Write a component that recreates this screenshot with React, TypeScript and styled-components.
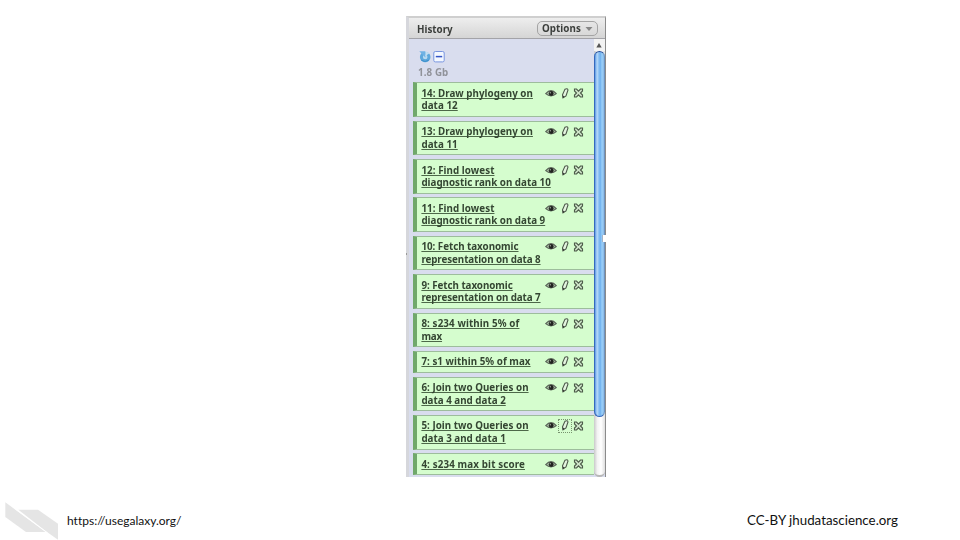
import React from "react";
import styled, { createGlobalStyle } from "styled-components";

const GlobalStyle = createGlobalStyle`
  body { margin: 0; background: #fff; overflow: hidden; }
  * { box-sizing: border-box; }
`;

const Slide = styled.main`
  width: 960px;
  height: 540px;
  padding-top: 16px;
  display: flex;
  flex-direction: column;
  background: #fff;
`;

const Panel = styled.section`
  position: relative;
  width: 200px;
  height: 461px;
  margin-left: 406px;
  border-top: 2px solid #cfcfcf;
  border-left: 3px solid #d6d7dc;
  border-right: 1px solid #8b8b8b;
  display: flex;
  flex-direction: column;
  font-family: "Noto Sans", "Open Sans", sans-serif;
  font-weight: 700;
  color: #3b3e3b;
`;

const Header = styled.header`
  flex: none;
  height: 21px;
  display: flex;
  align-items: center;
  justify-content: space-between;
  padding: 1px 7px 0 8px;
  border-bottom: 1px solid #a3a3a8;
  background: linear-gradient(#eeeeee, #d5d5d5);
  font-size: 9.8px;
`;

const Title = styled.span`
  position: static;
  padding-top: 1px;
  filter: blur(0.3px);
`;

const OptionsButton = styled.button`
  width: 61px;
  height: 15px;
  padding: 0 4px;
  border: 1px solid #a4a4a4;
  border-radius: 5px;
  background: linear-gradient(#e6e6e6, #d8d8d8);
  font: inherit;
  line-height: 13px;
  letter-spacing: 0.06px;
  color: inherit;
  display: flex;
  align-items: center;
  justify-content: space-between;
  filter: blur(0.3px);
`;

const Body = styled.div`
  flex: 1;
  min-height: 0;
  display: flex;
  background: #d9ddee;
`;

const Content = styled.div`
  flex: 1;
  min-width: 0;
  overflow: hidden;
  padding-left: 4px;
`;

const Summary = styled.div`
  height: 43.3px;
  padding: 11px 0 0 5px;
`;

const Tools = styled.div`
  display: flex;
  gap: 2px;
  height: 13px;
  margin-left: 1px;
  filter: blur(0.3px);
`;

const Size = styled.div`
  margin-top: 3.4px;
  font-size: 9.8px;
  line-height: 13px;
  letter-spacing: 0.1px;
  color: #909299;
  filter: blur(0.3px);
`;

const Row = styled.article<{ $single?: boolean }>`
  height: ${(p) => (p.$single ? 21.9 : 34.7)}px;
  margin-bottom: 3.7px;
  padding: 4.5px 0 0 4.4px;
  display: flex;
  border: 1px solid #9dbd9c;
  border-right: 0;
  border-left: 4px solid #70a86b;
  background: #d5fdce;
`;

const Name = styled.div`
  width: 122.6px;
  font-size: 9.8px;
  line-height: 12.5px;
  white-space: nowrap;
  filter: blur(0.3px);
`;

const Line = styled.span<{ $spacing: number }>`
  display: block;
  width: max-content;
  height: 12.5px;
  color: #344632;
  letter-spacing: ${(p) => p.$spacing}px;
  text-decoration: underline;
  text-decoration-color: #4d6849;
  text-decoration-thickness: 1px;
  text-underline-offset: 1px;
  text-decoration-skip-ink: none;
`;

const Actions = styled.div`
  display: flex;
  height: 13px;
  margin: -1.5px 0 0 0;
  filter: blur(0.25px);
`;

const Action = styled.span<{ $focus?: boolean }>`
  width: 14px;
  height: 14px;
  display: flex;
  align-items: center;
  justify-content: center;
  outline: ${(p) => (p.$focus ? "1px dotted #78936f" : "none")};
  outline-offset: -1px;
`;

const Track = styled.div`
  flex: none;
  width: 11.5px;
  display: flex;
  flex-direction: column;
  background: linear-gradient(90deg, #c9c9c9, #f3f3f3 30%, #fff 65%, #dedede);
  border-bottom: 2px solid #b8b8b8;
  border-radius: 0 0 6px 6px;
`;

const TrackUp = styled.div`
  height: 12px;
  display: flex;
  align-items: center;
  justify-content: center;
  background: #f3f3f3;
`;

const Thumb = styled.div`
  height: 366px;
  border: 1px solid #3569bd;
  border-top-color: #234995;
  border-right-color: #6d93c0;
  border-radius: 6px;
  background: linear-gradient(90deg, #5b98e4, #b8daf8 24%, #8fc2f4 40%, #6eb0ee 58%, #9ad0fa 78%, #8ab9e5);
`;

const Handle = styled.i`
  position: absolute;
  left: 193px;
  top: 217px;
  width: 5px;
  height: 7px;
  background: #fff;
  border-left: 1px solid #a5b3c6;
`;

const Speck = styled.i`
  position: absolute;
  left: -3px;
  top: 235px;
  width: 1px;
  height: 2px;
  background: #999;
`;

const Footer = styled.footer`
  height: 43px;
  margin-top: 20px;
  display: flex;
  font-family: Lato, sans-serif;
  font-variant-ligatures: none;
  color: #111;
  line-height: 20px;
`;

const Logo = styled.svg`
  flex: none;
  width: 67px;
  height: 43px;
`;

const Source = styled.span`
  width: 680px;
  padding-top: 14px;
  font-size: 12px;
`;

const Credit = styled.span`
  padding-top: 13px;
  font-size: 13.33px;
  white-space: nowrap;
`;

type Entry = { lines: [string, number][]; focus?: boolean };

const entries: Entry[] = [
  { lines: [["14: Draw phylogeny on", 0.03], ["data 12", 0.06]] },
  { lines: [["13: Draw phylogeny on", 0.03], ["data 11", 0.06]] },
  { lines: [["12: Find lowest", 0.06], ["diagnostic rank on data 10", 0]] },
  { lines: [["11: Find lowest", 0.06], ["diagnostic rank on data 9", 0]] },
  { lines: [["10: Fetch taxonomic", -0.03], ["representation on data 8", -0.08]] },
  { lines: [["9: Fetch taxonomic", -0.04], ["representation on data 7", -0.08]] },
  { lines: [["8: s234 within 5% of", 0.11], ["max", -0.15]] },
  { lines: [["7: s1 within 5% of max", 0.04]] },
  { lines: [["6: Join two Queries on", 0.03], ["data 4 and data 2", 0.01]] },
  { lines: [["5: Join two Queries on", 0.03], ["data 3 and data 1", 0.01]], focus: true },
  { lines: [["4: s234 max bit score", 0.13]] },
];

const Eye = () => (
  <svg width="12" height="9" viewBox="0 0 12 9">
    <path d="M.7 4.7Q6-1.4 11.3 4.7Q6 9.3 .7 4.7Z" fill="#a5bba0" stroke="#5a6558" strokeWidth="1.1" />
    <circle cx="6.2" cy="4.5" r="2.4" fill="#20221f" />
    <circle cx="5.3" cy="3.7" r=".7" fill="#a5aaa3" />
  </svg>
);

const Pencil = () => (
  <svg width="8" height="11" viewBox="0 0 8 11">
    <path d="M3.9 1.3Q6.5-.2 7 2L5 8L2 9.9L1.5 6.9Z" fill="#e3f4df" stroke="#4d594a" strokeWidth="1.1" />
    <path d="M1.7 7.4L3.8 8.8L1.8 10Z" fill="#353b34" />
  </svg>
);

const Cross = () => (
  <svg width="11" height="10" viewBox="0 0 11 10">
    <path d="M1.5 1H3.5L5.5 3.1L7.5 1H9.5V3L7.5 5L9.5 7V9H7.5L5.5 6.9L3.5 9H1.5V7L3.5 5L1.5 3Z" fill="#d0e6ca" stroke="#4c5b49" strokeWidth="1.15" />
  </svg>
);

function HistoryRow({ entry }: { entry: Entry }) {
  return (
    <Row $single={entry.lines.length === 1}>
      <Name>
        {entry.lines.map(([text, spacing]) => (
          <Line key={text} $spacing={spacing}>{text}</Line>
        ))}
      </Name>
      <Actions>
        <Action><Eye /></Action>
        <Action $focus={entry.focus}><Pencil /></Action>
        <Action><Cross /></Action>
      </Actions>
    </Row>
  );
}

export default function App() {
  return (
    <>
      <GlobalStyle />
      <Slide>
        <Panel>
          <Header>
            <Title>History</Title>
            <OptionsButton>
              Options
              <svg width="8" height="6" viewBox="0 0 8 6"><path d="M.5 1H7.5L4 5Z" fill="#858585" /></svg>
            </OptionsButton>
          </Header>
          <Body>
            <Content>
              <Summary>
                <Tools>
                  <svg width="12" height="13" viewBox="0 0 12 13">
                    <circle cx="6.2" cy="7" r="3.8" fill="#b9daf0" stroke="#5da8dc" strokeWidth="3" />
                    <path d="M.3 1.3H6.4V7.4Z" fill="#6fb2e4" />
                    <path d="M6.4 1L10.5 3.3L6.4 6Z" fill="#c3dff2" />
                    <path d="M2 10Q6 13 10 10" fill="none" stroke="#3f8fcb" />
                  </svg>
                  <svg width="12" height="13" viewBox="0 0 12 13">
                    <rect x=".8" y="1.5" width="10.4" height="10.4" rx="1.5" fill="#f4f8ff" stroke="#7794df" />
                    <path d="M2.8 6.6H9.2" stroke="#3555c5" strokeWidth="1.5" />
                  </svg>
                </Tools>
                <Size>1.8 Gb</Size>
              </Summary>
              {entries.map((entry) => <HistoryRow key={entry.lines[0][0]} entry={entry} />)}
            </Content>
            <Track>
              <TrackUp>
                <svg width="6" height="5" viewBox="0 0 6 5"><path d="M3 0L5.7 4.6H.3Z" fill="#555" /></svg>
              </TrackUp>
              <Thumb />
            </Track>
          </Body>
          <Handle />
          <Speck />
        </Panel>
        <Footer>
          <Logo viewBox="0 0 67 43">
            <path d="M5.3 5.3L45.6 35H26L5.3 20Z" fill="#e5e5e5" />
            <path d="M18.4 12.8H38L58 26.7V42.7L45.6 34Z" fill="#e5e5e5" />
            <path d="M14 11.2L48 36.2" stroke="#fff" strokeWidth=".7" />
          </Logo>
          <Source>https://usegalaxy.org/</Source>
          <Credit>CC-BY jhudatascience.org</Credit>
        </Footer>
      </Slide>
    </>
  );
}
